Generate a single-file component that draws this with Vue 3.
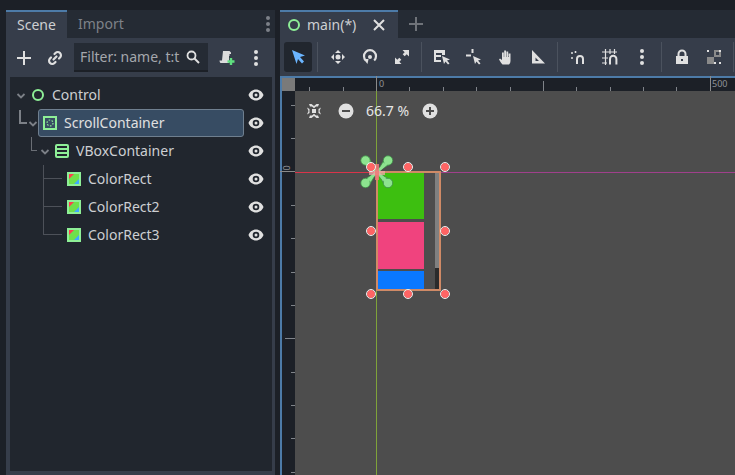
<script setup>
const rows = [
  { name: 'Control', icon: 'control', depth: 0 },
  { name: 'ScrollContainer', icon: 'scroll', depth: 1, selected: true },
  { name: 'VBoxContainer', icon: 'vbox', depth: 2 },
  { name: 'ColorRect', icon: 'rect', depth: 3, first: true },
  { name: 'ColorRect2', icon: 'rect', depth: 3 },
  { name: 'ColorRect3', icon: 'rect', depth: 3 },
]
const hTicks = [14, 48, 114, 148, 181, 215, 281, 315, 348, 381]
const vTicks = [105, 138, 205, 238, 272, 305, 372, 405, 438, 472]
const handles = [
  [371, 167], [408, 167], [445, 167], [371, 231], [445, 231], [371, 294], [408, 294], [445, 294],
]
</script>

<template>
  <div class="editor">
    <section class="dock">
      <div class="tabs">
        <div class="tab active"><span class="lift">Scene</span></div>
        <div class="tab"><span class="lift">Import</span></div>
        <svg class="tab-menu" width="4" height="16" viewBox="0 0 4 16"><g fill="#7d8188"><circle cx="2" cy="2" r="2"/><circle cx="2" cy="8" r="2"/><circle cx="2" cy="14" r="2"/></g></svg>
      </div>
      <div class="dock-body">
        <div class="dock-tools">
          <svg class="t-add" width="16" height="16" viewBox="0 0 16 16"><path d="M8 1v14M1 8h14" stroke="#e0e0e0" stroke-width="2"/></svg>
          <svg class="t-link" width="16" height="16" viewBox="0 0 16 16"><path d="M6.500 9.500l3-3M7.500 4l1-1a3 3 0 0 1 4.500 4.500l-1 1M8.500 12l-1 1A3 3 0 0 1 3 8.500l1-1" fill="none" stroke="#e0e0e0" stroke-width="2.200" stroke-linecap="round"/></svg>
          <div class="filter">
            <span>Filter: name, t:t</span>
            <svg width="14" height="14" viewBox="0 0 14 14"><circle cx="5.500" cy="5.500" r="4" fill="none" stroke="#e0e0e0" stroke-width="1.800"/><path d="M8.500 8.500L13 13" stroke="#e0e0e0" stroke-width="2"/></svg>
          </div>
          <svg class="t-script" width="16" height="16" viewBox="0 0 16 16"><path d="M4 1h6.500L12 2.500V4h-1.500v2H10v7H1.500q-1-1-1-2.500H3z" fill="#dcdcdc"/><path d="M12 8v7M8.500 11.500h7" stroke="#5fe07f" stroke-width="2.400"/></svg>
          <svg class="t-more" width="6" height="16" viewBox="0 0 6 16"><g fill="#e0e0e0"><circle cx="3" cy="2" r="2"/><circle cx="3" cy="8" r="2"/><circle cx="3" cy="14" r="2"/></g></svg>
        </div>
        <div class="tree">
          <div v-for="row in rows" :key="row.name" class="row" :class="'depth-' + row.depth">
            <span v-if="row.depth === 1" class="elbow-big"></span>
            <span v-if="row.depth === 2" class="elbow-small"></span>
            <span v-if="row.depth === 3" class="branch" :class="{ first: row.first }"></span>
            <svg v-if="row.depth < 3" class="fold" width="10" height="6" viewBox="0 0 10 6"><path d="M1.500 1L5 4.500 8.500 1" fill="none" stroke="#7c8087" stroke-width="1.800"/></svg>
            <div class="node" :class="{ selected: row.selected }">
              <svg class="node-icon" width="14" height="14" viewBox="0 0 14 14">
                <circle v-if="row.icon === 'control'" cx="7" cy="7" r="5" fill="none" stroke="#8eef97" stroke-width="2"/>
                <g v-else-if="row.icon === 'scroll'">
                  <rect x="1" y="1" width="12" height="12" fill="none" stroke="#8eef97" stroke-width="2"/>
                  <circle cx="7" cy="7" r="3" fill="none" stroke="#8eef97" stroke-width="1.200" stroke-dasharray="1.600 1.500"/>
                </g>
                <g v-else-if="row.icon === 'vbox'">
                  <rect x="1" y="1" width="12" height="12" rx="1" fill="none" stroke="#8eef97" stroke-width="2"/>
                  <path d="M1 5h12M1 9h12" stroke="#8eef97" stroke-width="2"/>
                </g>
                <g v-else>
                  <rect x="2" y="2" width="10" height="10" fill="#6fe04a"/>
                  <path d="M2 2h5L2 7z" fill="#ff3d50"/>
                  <path d="M12 12H7l5-5z" fill="#3fa9ff"/>
                  <rect x="1" y="1" width="12" height="12" fill="none" stroke="#8eef97" stroke-width="2"/>
                </g>
              </svg>
              <span class="lift">{{ row.name }}</span>
            </div>
            <svg class="eye" width="16" height="12" viewBox="0 0 16 12"><path d="M8 .5C4.500.5 1.800 2.800.5 6c1.300 3.200 4 5.500 7.500 5.500s6.200-2.300 7.500-5.500C14.200 2.800 11.500.5 8 .5zm0 2.200a3.300 3.300 0 1 1 0 6.600 3.300 3.300 0 0 1 0-6.600zM8 4.500a1.500 1.500 0 1 0 0 3 1.500 1.500 0 0 0 0-3z" fill="#e0e0e0" fill-rule="evenodd"/></svg>
          </div>
        </div>
      </div>
    </section>

    <section class="main">
      <div class="tabs main-tabs">
        <div class="tab active scene-tab">
          <svg width="12" height="12" viewBox="0 0 12 12"><circle cx="6" cy="6" r="5" fill="none" stroke="#8eef97" stroke-width="2"/></svg>
          <span class="lift">main(*)</span>
          <svg class="close" width="12" height="12" viewBox="0 0 12 12"><path d="M1 1l10 10M11 1L1 11" stroke="#e0e0e0" stroke-width="2"/></svg>
        </div>
        <svg class="new-tab" width="14" height="14" viewBox="0 0 14 14"><path d="M7 0v14M0 7h14" stroke="#6f7379" stroke-width="2"/></svg>
      </div>
      <div class="toolbar">
        <div class="tool on">
          <svg width="16" height="16" viewBox="0 0 16 16"><path d="M2 1l13 5.500-5 1.500 4 4.500-2 2L8 10l-1.500 5z" fill="#6bb5ff"/></svg>
        </div>
        <i class="sep"></i>
        <div class="tool">
          <svg width="16" height="16" viewBox="0 0 16 16"><g fill="#e0e0e0"><path d="M8 1l3 3H5zM8 15l-3-3h6zM1 8l3-3v6zM15 8l-3 3V5z"/><circle cx="8" cy="8" r="2.500"/></g></svg>
        </div>
        <div class="tool">
          <svg width="16" height="16" viewBox="0 0 16 16"><path d="M3.800 11.500A6 6 0 1 1 12.200 11.500" fill="none" stroke="#e0e0e0" stroke-width="2.200"/><circle cx="8" cy="8" r="2" fill="#e0e0e0"/><path d="M1.500 10h5l-1 5z" fill="#e0e0e0"/></svg>
        </div>
        <div class="tool">
          <svg width="16" height="16" viewBox="0 0 16 16"><g fill="#e0e0e0"><path d="M8.500 1H15v6.500l-2.300-2.300-2 2-2-2 2-2zM7.500 15H1V8.500l2.300 2.300 2-2 2 2-2 2z"/></g></svg>
        </div>
        <i class="sep"></i>
        <div class="tool">
          <svg width="18" height="16" viewBox="0 0 18 16"><path d="M1 1h11v5H9V4H3v2h5v2H3v3h5v2H1z" fill="#e0e0e0"/><path d="M9 7l8 3.500-3 1 2.500 3-1.500 1-2.500-3-1.500 2.500z" fill="#e0e0e0"/></svg>
        </div>
        <div class="tool">
          <svg width="18" height="16" viewBox="0 0 18 16"><path d="M1 6.500h5M7.500 0v4" stroke="#e0e0e0" stroke-width="2"/><path d="M8 7l8 3.500-3 1 2.500 3-1.500 1-2.500-3L10 15z" fill="#e0e0e0"/></svg>
        </div>
        <div class="tool">
          <svg width="16" height="16" viewBox="0 0 16 16"><path d="M4.500 15.500Q3 14 1 10.500l1-1L4 11V3.500h1.800V8h.4V1.500H8V8h.4V2.500h1.800V8h.4V4.500h1.900V12q0 2-1.500 3.500z" fill="#e0e0e0"/></svg>
        </div>
        <div class="tool">
          <svg width="16" height="16" viewBox="0 0 16 16"><path fill-rule="evenodd" d="M2 1l13 13.500H2zM5.500 8.500V12H9z" fill="#e0e0e0"/></svg>
        </div>
        <i class="sep"></i>
        <div class="tool">
          <svg width="14" height="14" viewBox="0 0 14 14"><path d="M0 3h2M4.500 1v2M0 8h2" stroke="#e0e0e0" stroke-width="1.600"/><path d="M6 14V9a3 3 0 0 1 6 0v5" fill="none" stroke="#e0e0e0" stroke-width="2"/></svg>
        </div>
        <div class="tool">
          <svg width="16" height="16" viewBox="0 0 16 16"><path d="M0 3h15M0 9h6M0 14h5M3.500 0v16M8 0v5M12.500 0v5" stroke="#e0e0e0" stroke-width="1.200"/><path d="M8 15.500V10a3.200 3.200 0 0 1 6.400 0v5.500" fill="none" stroke="#e0e0e0" stroke-width="2"/></svg>
        </div>
        <div class="tool">
          <svg width="4" height="16" viewBox="0 0 4 16"><g fill="#e0e0e0"><circle cx="2" cy="2" r="2"/><circle cx="2" cy="8" r="2"/><circle cx="2" cy="14" r="2"/></g></svg>
        </div>
        <i class="sep"></i>
        <div class="tool">
          <svg width="14" height="16" viewBox="0 0 14 16"><path d="M3.500 7V5a3.500 3.500 0 0 1 7 0v2" fill="none" stroke="#e0e0e0" stroke-width="2"/><path fill-rule="evenodd" d="M1 7h12v8H1zM6 10v2h2v-2z" fill="#e0e0e0"/></svg>
        </div>
        <div class="tool">
          <svg width="16" height="16" viewBox="0 0 16 16"><rect x="1" y="8" width="7" height="7" fill="#8a8a8a"/><path d="M8 1h7v7H8zM10 3v3h3V3z" fill="#8a8a8a" fill-rule="evenodd"/><path d="M1 1h2v2H1zM13 1h2v2h-2zM13 13h2v2h-2zM8 13h2v2H8z" fill="#e0e0e0"/></svg>
        </div>
        <i class="sep"></i>
      </div>
      <div class="canvas">
        <div class="corner"></div>
        <div class="ruler-top">
          <i v-for="x in hTicks" :key="x" class="h-tick" :style="{ left: x + 'px' }"></i>
          <i class="h-mid" style="left: 248px"></i>
          <i class="h-major" style="left: 81px"></i>
          <i class="h-major" style="left: 415px"></i>
          <span class="ruler-label" style="left: 84px">0</span>
          <span class="ruler-label" style="left: 417px">500</span>
        </div>
        <div class="ruler-left"></div>
        <div class="viewport"></div>
      </div>
      <!-- everything on the 2D canvas is placed in window coordinates -->
      <div class="overlay">
        <i v-for="y in vTicks" :key="y" class="v-tick" :style="{ top: y + 'px' }"></i>
        <i class="v-full"></i>
        <i class="v-major"></i>
        <span class="v-label">0</span>
        <i class="guide-v"></i>
        <i class="guide-h"></i>
        <i class="guide-h2"></i>
        <div class="zoom-bar">
          <svg width="14" height="14" viewBox="0 0 14 14"><g fill="#e0e0e0"><path d="M2 0h2.500L7 2 9.500 0H12l-1 2.500H9L7 4.300 5 2.500H3zM2 14h2.500L7 12l2.500 2H12l-1-2.500H9L7 9.700 5 11.500H3zM0 3.500L2.500 5v4L0 10.500 1.500 7zM14 3.500L11.500 5v4l2.500 1.500L12.500 7z"/><rect x="5" y="5" width="4" height="4"/></g></svg>
          <svg class="zb-minus" width="16" height="16" viewBox="0 0 16 16"><circle cx="8" cy="8" r="7.500" fill="#e0e0e0"/><path d="M4 8h8" stroke="#4d4d4d" stroke-width="2"/></svg>
          <span>66.7 %</span>
          <svg class="zb-plus" width="16" height="16" viewBox="0 0 16 16"><circle cx="8" cy="8" r="7.500" fill="#e0e0e0"/><path d="M4 8h8M8 4v8" stroke="#4d4d4d" stroke-width="2"/></svg>
        </div>
        <div class="scroll-box">
          <div class="bar green"></div>
          <div class="bar pink"></div>
          <div class="bar blue"></div>
          <div class="sb"><div class="sb-grab"></div></div>
        </div>
        <svg class="anchors" width="34" height="34" viewBox="0 0 34 34">
          <g fill="#8de38f" stroke="#3f8f48" stroke-width=".8">
            <path d="M17 17L2.500 8 8.500 2.500zM17 17L25.500 2.500 31.500 8zM17 17L2.500 25.500 8.500 31.500zM17 17L25.500 31.500 31.500 25.500z"/>
            <circle cx="5.500" cy="5.500" r="4.700"/>
            <circle cx="28" cy="5.500" r="4.700"/>
            <circle cx="5.500" cy="28" r="4.700"/>
            <circle cx="28" cy="28" r="4.700"/>
          </g>
          <path d="M17 17L4 6M17 17L29 6M17 17L4 29M17 17L29 29" stroke="#8de38f" stroke-width="3"/>
        </svg>
        <i class="pivot-h"></i>
        <i class="pivot-v"></i>
        <i v-for="(h, i) in handles" :key="i" class="handle" :style="{ left: h[0] - 4 + 'px', top: h[1] - 4 + 'px' }"></i>
      </div>
    </section>
  </div>
</template>

<style scoped>
.editor {
  position: relative;
  display: flex;
  gap: 5px;
  width: 735px;
  height: 475px;
  padding: 10px 0 0 6px;
  box-sizing: border-box;
  overflow: hidden;
  background: #1c2027;
  font-family: "Noto Sans", "Open Sans", sans-serif;
  font-size: 14px;
  color: #cdcfd2;
}

.lift {
  position: relative;
  top: -1px;
}

.dock {
  display: flex;
  flex-direction: column;
  width: 269px;
}

.tabs {
  display: flex;
  align-items: stretch;
  height: 28px;
  background: #252b34;
  position: relative;
}

.tab {
  display: flex;
  align-items: center;
  padding: 0 11px;
  color: #7e8288;
}

.tab.active {
  box-sizing: border-box;
  width: 61px;
  background: #363d4a;
  color: #cdcfd2;
  border-top: 2px solid #4d7ba8;
}

.tab-menu {
  position: absolute;
  right: 5px;
  top: 6px;
}

.dock-body {
  flex: 1;
  display: flex;
  flex-direction: column;
  background: #363d4a;
  padding: 0 3px 4px 4px;
}

.dock-tools {
  display: flex;
  align-items: center;
  height: 39px;
}

.t-add { margin-left: 6px; }
.t-link { margin-left: 15px; }
.t-script { margin-left: 11px; }
.t-more { margin-left: 18px; }

.filter {
  display: flex;
  align-items: center;
  justify-content: space-between;
  box-sizing: border-box;
  width: 134px;
  height: 29px;
  margin-left: 11px;
  padding: 0 8px 0 6px;
  background: #252b34;
  border-bottom: 2px solid #1c2027;
  color: #a4a7ac;
  white-space: nowrap;
}

.tree {
  flex: 1;
  background: #21262e;
  padding-top: 4px;
}

.row {
  position: relative;
  display: flex;
  align-items: center;
  height: 28px;
}

.fold {
  position: absolute;
  top: 12px;
}

.depth-0 .fold { left: 6px; }
.depth-1 .fold { left: 18px; }
.depth-2 .fold { left: 30px; }

.node {
  display: flex;
  align-items: center;
  gap: 7px;
  box-sizing: border-box;
  height: 28px;
  padding-left: 5px;
}

.depth-0 .node { margin-left: 16px; }
.depth-1 .node { margin-left: 28px; }
.depth-2 .node { margin-left: 40px; }
.depth-3 .node { margin-left: 52px; }

.node.selected {
  width: 206px;
  background: #374c63;
  border: 1px solid #6f7f8f;
  border-radius: 3px;
  color: #e0e0e0;
  padding-left: 4px;
}

.node-icon { flex: none; }

.eye {
  position: absolute;
  left: 238px;
  top: 8px;
}

.elbow-big {
  position: absolute;
  left: 9px;
  top: 1px;
  width: 6px;
  height: 12px;
  border-left: 2px solid #7c8087;
  border-bottom: 2px solid #7c8087;
}

.elbow-small {
  position: absolute;
  left: 21px;
  top: 0;
  width: 5px;
  height: 13px;
  border-left: 1px solid #6a6e75;
  border-bottom: 1px solid #6a6e75;
}

.branch {
  position: absolute;
  left: 33px;
  top: -15px;
  width: 18px;
  height: 28px;
  border-left: 1px solid #4d5159;
  border-bottom: 1px solid #4d5159;
}

.branch.first {
  top: 0;
  height: 13px;
}

.main {
  flex: 1;
  display: flex;
  flex-direction: column;
  min-width: 0;
}

.scene-tab {
  width: 118px !important;
  padding: 0 0 0 8px;
  gap: 7px;
}

.close { margin-left: 10px; }

.new-tab {
  align-self: center;
  margin-left: 11px;
}

.toolbar {
  display: flex;
  align-items: center;
  height: 38px;
  padding-left: 2px;
  background: #363d4a;
}

.tool {
  display: flex;
  align-items: center;
  justify-content: center;
  width: 28px;
  height: 30px;
  margin: 0 2px;
  flex: none;
}

.tool.on {
  background: #21262e;
  border-radius: 3px;
}

.sep {
  flex: none;
  width: 1px;
  height: 30px;
  background: #4b525e;
  margin: 0 4px 0 3px;
}

.canvas {
  flex: 1;
  display: grid;
  grid-template-columns: 13px 1fr;
  grid-template-rows: 13px 1fr;
  background: #1c2027;
  border-top: 2px solid #4d7ba8;
  border-left: 2px solid #4d7ba8;
}

.corner { background: #7a7a7a; }

.ruler-top {
  position: relative;
  background: #1c2027;
}

.ruler-left { background: #1c2027; }

.viewport { background: #4d4d4d; }

.h-tick {
  position: absolute;
  bottom: 0;
  width: 1px;
  height: 4px;
  background: #80848a;
}

.h-mid {
  position: absolute;
  bottom: 0;
  width: 1px;
  height: 10px;
  background: #80848a;
}

.h-major {
  position: absolute;
  top: -2px;
  bottom: 0;
  width: 1px;
  background: #8a8a8a;
}

.ruler-label {
  position: absolute;
  top: 0;
  font-size: 9px;
  line-height: 12px;
  color: #8f9296;
}

.overlay {
  position: absolute;
  inset: 0;
  pointer-events: none;
}

.v-tick {
  position: absolute;
  left: 291px;
  width: 4px;
  height: 1px;
  background: #80848a;
}

.v-full {
  position: absolute;
  left: 280px;
  top: 171px;
  width: 15px;
  height: 1px;
  background: #8a8a8a;
}

.v-major {
  position: absolute;
  left: 285px;
  top: 338px;
  width: 10px;
  height: 1px;
  background: #80848a;
}

.v-label {
  position: absolute;
  left: 284px;
  top: 162px;
  font-size: 9px;
  line-height: 12px;
  color: #8f9296;
  transform: rotate(-90deg);
}

.guide-v {
  position: absolute;
  left: 376px;
  top: 91px;
  bottom: 0;
  width: 1px;
  background: #7fa33a;
}

.guide-h {
  position: absolute;
  left: 295px;
  width: 82px;
  top: 172px;
  height: 1px;
  background: #d9344a;
}

.guide-h2 {
  position: absolute;
  left: 377px;
  right: 0;
  top: 172px;
  height: 1px;
  background: #a0408c;
}

.zoom-bar {
  position: absolute;
  left: 307px;
  top: 101px;
  display: flex;
  align-items: center;
  color: #e6e6e6;
}

.zb-minus { margin-left: 17px; }
.zb-plus { margin-left: 13px; }
.zoom-bar span { margin-left: 12px; font-size: 14px; }

.scroll-box {
  position: absolute;
  left: 376px;
  top: 171px;
  box-sizing: border-box;
  width: 65px;
  height: 120px;
  border: 2px solid #d08a66;
  background: #4d4d4d;
  display: flex;
  flex-direction: column;
}

.bar { width: 46px; flex: none; }
.green { height: 46px; background: #3dbf10; }
.pink { height: 47px; margin-top: 3px; background: #f0437e; }
.blue { height: 18px; margin-top: 2px; background: #0a78ff; }

.sb {
  position: absolute;
  top: 0;
  bottom: 0;
  right: 0;
  width: 4px;
  background: #2b2b2b;
}

.sb-grab {
  height: 95px;
  background: #808080;
}

.anchors {
  position: absolute;
  left: 360px;
  top: 155px;
}

.pivot-h {
  position: absolute;
  left: 369px;
  top: 171px;
  width: 16px;
  height: 4px;
  background: rgba(240, 170, 170, .75);
}

.pivot-v {
  position: absolute;
  left: 375px;
  top: 164px;
  width: 4px;
  height: 16px;
  background: rgba(240, 120, 120, .85);
}

.handle {
  position: absolute;
  box-sizing: border-box;
  width: 8px;
  height: 8px;
  border-radius: 50%;
  background: #ff6464;
  outline: 1px solid #f0f0f0;
  outline-offset: 0;
}
</style>

<style>
html, body { background: #1c2027; }
</style>
